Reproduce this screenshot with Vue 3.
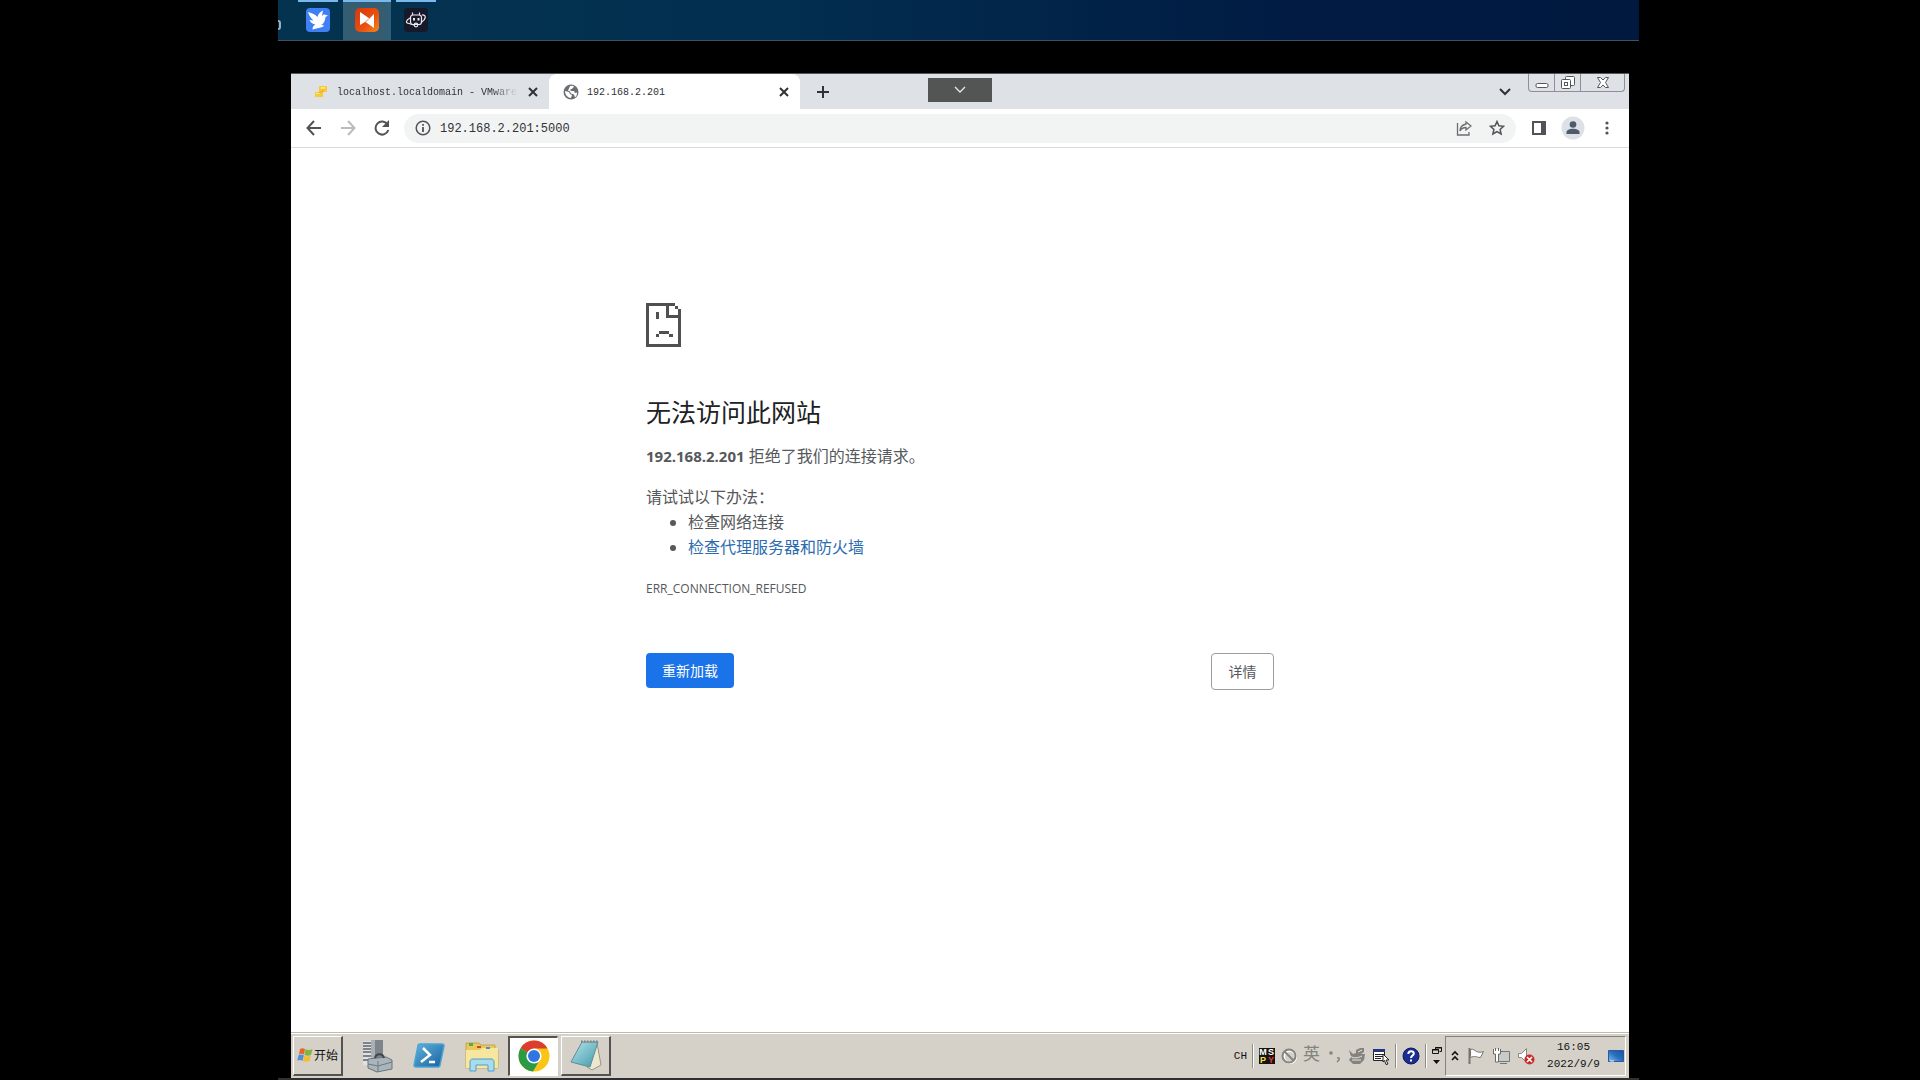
<script setup>
import { ref } from 'vue'

const url = ref('192.168.2.201:5000')
const tips = [
  { text: '检查网络连接', link: false },
  { text: '检查代理服务器和防火墙', link: true }
]
</script>

<template>
  <div class="desktop">
    <div class="stage">
      <header class="hostbar">
        <span class="cut" aria-hidden="true"></span>
        <button class="host first" aria-label="飞鸟">
          <svg width="24" height="24" viewBox="0 0 24 24"><rect width="24" height="24" rx="4" fill="#3f80f4" /><path fill="#fff" d="M2 4c3 1 7 2 9.500 5C12 6 14 4 17 2.500L16 8c1-1.500 2.500-2 4-1l2 .5-2.500 1.500c-.5 4-1.500 6-4 8l3 .8c-3 2.200-6 2.200-10 3.200l-2 .5c0-2.500 1-4 3-5-3-.5-5-2-6-4.500l4 .5C5 10.500 3 7.500 2 4z" /></svg>
        </button>
        <button class="host active" aria-label="ToDesk">
          <svg width="24" height="24" viewBox="0 0 24 24"><defs><linearGradient id="org" x1="0" y1="0" x2="1" y2="1"><stop offset="0" stop-color="#d8370c" /><stop offset=".6" stop-color="#ea5011" /><stop offset="1" stop-color="#f78a1c" /></linearGradient></defs><rect width="24" height="24" rx="5" fill="url(#org)" /><path fill="#fff" d="M5 4l9.500 6.500L10 14l-5 3zM19 6v14l-8.500-6L15 10z" /><path stroke="#f0a084" d="M10 14l5-4" /></svg>
        </button>
        <button class="host" aria-label="终端助手">
          <svg width="24" height="24" viewBox="0 0 24 24"><rect width="24" height="24" rx="4" fill="#17182a" /><g fill="none" stroke="#e8e8ee" stroke-width="1.200"><rect x="6.500" y="7" width="11" height="9.500" rx="2.500" /><path d="M8.500 7V4.500M15.500 7V4.500M6 10c-4 2-5 5-1 5.500l5 1.500M18 7c4.500-.5 4.500 4-1 7.500" /><path d="M10 10v2.500M14.500 10v2.500" stroke-width="2" /><circle cx="12" cy="17" r="1.800" /></g></svg>
        </button>
      </header>

      <div class="window">
        <div class="tabs">
          <div class="tab idle">
            <svg width="16" height="16" viewBox="0 0 16 16"><path fill="#f6cb35" d="M6 2h8v6h-4v5H2V8h4z" /><path stroke="#e5ad24" d="M6 8h4V4" fill="none" /><path fill="#fbe38a" d="M8 3h4v2H8zM3 9h4v1H3z" /></svg>
            <span class="name fade">localhost.localdomain - VMware</span>
            <button class="x" aria-label="关闭标签页"><svg width="12" height="12" viewBox="0 0 12 12"><path d="M2 2l8 8M10 2l-8 8" stroke="#2f3336" stroke-width="2" /></svg></button>
          </div>
          <div class="tab current">
            <svg width="16" height="16" viewBox="0 0 16 16"><circle cx="8" cy="8" r="7.500" fill="#6a6e72" /><path fill="#fff" d="M2 7l4 1 1 2 2 1-1 3c-3 0-6-3-6-7zM7 2l3-.3 1 1-2 2-2 1 1 1.300h3l1 2 2-.5c.3 2-.8 4-2 5l-1-3-3-1-1-2-2-1 1-2z" /></svg>
            <span class="name">192.168.2.201</span>
            <button class="x" aria-label="关闭标签页"><svg width="12" height="12" viewBox="0 0 12 12"><path d="M2 2l8 8M10 2l-8 8" stroke="#2f3336" stroke-width="2" /></svg></button>
          </div>
          <button class="plus" aria-label="新标签页"><svg width="12" height="12" viewBox="0 0 12 12"><path d="M6 0v12M0 6h12" stroke="#2f3336" stroke-width="2" /></svg></button>
          <button class="pill" aria-label="展开工具栏"><svg width="12" height="8" viewBox="0 0 12 8"><path d="M1 1l5 5 5-5" fill="none" stroke="#e8e8e8" stroke-width="1.300" /></svg></button>
          <button class="search" aria-label="搜索标签页"><svg width="12" height="8" viewBox="0 0 12 8"><path d="M1 1l5 5 5-5" fill="none" stroke="#2f3336" stroke-width="2" /></svg></button>
          <div class="controls">
            <button class="min" aria-label="最小化"><svg width="14" height="16" viewBox="0 0 14 16"><rect x="1" y="8.500" width="12" height="4" rx="1.500" fill="#fff" stroke="#54585d" /></svg></button>
            <button class="restore" aria-label="还原"><svg width="14" height="16" viewBox="0 0 14 16"><rect x="4.500" y="1.500" width="9" height="9" rx="1" fill="#fff" stroke="#54585d" /><rect x=".5" y="4.500" width="9" height="9" rx="1" fill="#fff" stroke="#54585d" /><rect x="3.500" y="7.500" width="3" height="3" fill="#fff" stroke="#54585d" /></svg></button>
            <button class="close" aria-label="关闭"><svg width="14" height="16" viewBox="0 0 14 16"><path d="M1.500 2.500h3L7 5l2.500-2.500h3L9.500 7.500l3 5h-3L7 10l-2.500 2.500h-3l3-5z" fill="#fff" stroke="#54585d" /></svg></button>
          </div>
        </div>

        <div class="toolbar">
          <button aria-label="后退"><svg width="16" height="16" viewBox="0 0 16 16"><path d="M15 8H2M8 1L1.500 8 8 15" fill="none" stroke="#505357" stroke-width="2" /></svg></button>
          <button aria-label="前进"><svg width="16" height="16" viewBox="0 0 16 16"><path d="M1 8h13M8 1l6.500 7L8 15" fill="none" stroke="#b9bbbd" stroke-width="2" /></svg></button>
          <button aria-label="重新加载此页"><svg width="16" height="16" viewBox="0 0 16 16"><path d="M13.500 4.500A6.500 6.500 0 1 0 14.300 10" fill="none" stroke="#505357" stroke-width="2" /><path d="M15 0v7H8z" fill="#505357" /></svg></button>
          <div class="omnibox">
            <svg width="16" height="16" viewBox="0 0 16 16"><circle cx="8" cy="8" r="6.800" fill="none" stroke="#505357" stroke-width="1.500" /><path d="M8 7v5M8 4v1.800" stroke="#505357" stroke-width="1.800" /></svg>
            <input v-model="url" aria-label="地址" spellcheck="false" />
            <button aria-label="分享"><svg width="16" height="16" viewBox="0 0 16 16"><path d="M1.500 3v12H13v-3M10 2l5 4-5 4V7.500C7 7.500 5 9 4 11c0-4 2-6 6-7z" fill="none" stroke="#6a6d70" stroke-width="1.300" /></svg></button>
            <button aria-label="收藏"><svg width="16" height="16" viewBox="0 0 16 16"><path d="M8 1.500l1.900 4.300 4.700.5-3.500 3.100 1 4.600L8 11.600 3.900 14l1-4.600L1.400 6.300l4.700-.5z" fill="none" stroke="#505357" stroke-width="1.500" /></svg></button>
          </div>
          <button aria-label="侧边栏"><svg width="14" height="14" viewBox="0 0 14 14"><rect x="1" y="1" width="12" height="12" fill="#fff" stroke="#505357" stroke-width="2" /><path d="M9 1h4v12H9z" fill="#505357" /></svg></button>
          <button aria-label="用户"><svg width="24" height="24" viewBox="0 0 24 24"><circle cx="12" cy="12" r="11.500" fill="#dde1e6" /><circle cx="12" cy="8.500" r="3.300" fill="#4d5b6c" /><path d="M5.500 18v-2c0-2 3-3.300 6.500-3.300s6.500 1.300 6.500 3.300v2z" fill="#4d5b6c" /></svg></button>
          <button aria-label="更多"><svg width="4" height="16" viewBox="0 0 4 16"><g fill="#505357"><circle cx="2" cy="3" r="1.600" /><circle cx="2" cy="8" r="1.600" /><circle cx="2" cy="13" r="1.600" /></g></svg></button>
        </div>

        <main class="page">
          <section class="error">
            <svg class="sad" width="36" height="45" viewBox="0 0 36 45" shape-rendering="crispEdges"><path fill="#505050" d="M0 0h29v3H3v38h29V6h3v38H0zM20 3h3v9h9v3H20zM29 3h3v3h-3zM10 9h3v7h-3zM13 28h10v3H13zM10 31h3v3h-3zM23 31h4v3h-4z" /></svg>
            <h1>无法访问此网站</h1>
            <p><strong>192.168.2.201</strong> 拒绝了我们的连接请求。</p>
            <div class="try">
              <p>请试试以下办法：</p>
              <ul>
                <li v-for="tip in tips" :key="tip.text">
                  <a v-if="tip.link" href="#buttons">{{ tip.text }}</a>
                  <template v-else>{{ tip.text }}</template>
                </li>
              </ul>
            </div>
            <div class="code">ERR_CONNECTION_REFUSED</div>
            <div id="buttons" class="buttons">
              <button class="reload">重新加载</button>
              <button class="details">详情</button>
            </div>
          </section>
        </main>

        <footer class="taskbar">
          <button class="start raised">
            <svg width="16" height="16" viewBox="0 0 16 16"><path fill="#e5652e" d="M3 2c2-1 3-1 5 0L7 7.500C5 6.500 4 6.500 2 7.500z" /><path fill="#7db642" d="M8.500 2.300c2 1 4.500 1 7 0L14 8c-2 1-4.500 1-6.500 0z" /><path fill="#4f8fd6" d="M1.500 8.200c2-1 3.500-1 5.300 0l-1.200 5.500c-2-1-3.300-1-5.300 0z" /><path fill="#f3bd2c" d="M7.300 8.700c2 1 4.500 1 6.500 0l-1.300 5.300c-2 1-4.500 1-6.500 0z" /></svg>
            <span>开始</span>
          </button>
          <div class="apps">
            <button aria-label="服务器管理器"><svg width="32" height="34" viewBox="0 0 32 34"><path fill="#7f868b" d="M9 1h12v24H9z" /><path fill="#a9b1b7" d="M9 1h4v24H9z" /><path fill="#dfe3e5" d="M1 2h8v24H1z" /><path stroke="#5d646a" stroke-width="1.500" d="M1 4h8M1 7h8M1 10h8M1 13h8M1 17h8M1 21h8" /><path fill="#a9b4bb" stroke="#69747c" d="M6 20l18-2 6 3v9l-15 3-9-4z" /><path stroke="#6d7a83" fill="none" d="M6 25l10 2 14-4M16 22v11" /><path fill="none" stroke="#3f474d" stroke-width="2" d="M13 19c1-5 8-5 9 0" /></svg></button>
            <button aria-label="PowerShell"><svg width="32" height="34" viewBox="0 0 32 34"><defs><linearGradient id="ps" x1="0" y1="0" x2="1" y2="1"><stop offset="0" stop-color="#5fb4e0" /><stop offset="1" stop-color="#195f9d" /></linearGradient></defs><path fill="url(#ps)" stroke="#4aa5d3" stroke-width="1.500" d="M7 5h22c1 0 2 1 2 2l-4 19c0 1-1 2-2 2H3c-1 0-2-1-2-2L5 7c0-1 1-2 2-2z" /><path d="M10 9l7 7-9 7M16 23h6" fill="none" stroke="#fff" stroke-width="2.500" /></svg></button>
            <button class="folder" aria-label="资源管理器"><svg width="36" height="34" viewBox="0 0 36 34"><path fill="#e9c85e" stroke="#c7a648" d="M2 9V4h13l2 2h14v4h3v19H2z" /><path fill="#f7e69d" d="M2 11h14l2-2h16v20H2z" /><path fill="#58a94c" d="M5 4h4v3H5z" /><path fill="#c64a33" d="M13 7h4v2h-4z" /><path fill="#4c8fc4" d="M22 8h4v2h-4z" /><path fill="#a9dbef" stroke="#4e9fc4" d="M6 32v-9c0-2 1-3 3-3h18c2 0 3 1 3 3v9h-6v-6H12v6z" /></svg></button>
            <button class="sunken" aria-label="Chrome"><svg width="32" height="32" viewBox="0 0 32 32"><circle cx="16" cy="16" r="15.500" fill="#fbc516" /><path fill="#dc3d2f" d="M16 16L2.600 8.200A15.500 15.500 0 0 1 29.500 8.500H16z" /><path fill="#2b9a48" d="M16 16L2.600 8.200A15.500 15.500 0 0 0 15 31.500l7-12z" /><circle cx="16" cy="16" r="7.600" fill="#fff" /><circle cx="16" cy="16" r="6" fill="#2f76e0" /></svg></button>
            <button class="raised note" aria-label="记事本"><svg width="34" height="32" viewBox="0 0 34 32"><defs><linearGradient id="np" x1="0" y1="0" x2="1" y2="1"><stop offset="0" stop-color="#b8e4ea" /><stop offset="1" stop-color="#3f98ab" /></linearGradient></defs><path fill="#ece8cf" stroke="#9c9679" d="M28 4l4 22-9 5-5-3z" /><path fill="url(#np)" stroke="#5b8e99" d="M13 3h16l-8 25-19-5z" /><path stroke="#7c7c78" stroke-width="2" stroke-dasharray="1.500 1.500" d="M12 2.500h17" /></svg></button>
          </div>
          <div class="lang">
            <span class="ch">CH</span>
            <i class="sep"></i>
            <span class="mspy" aria-label="MSPY"><b>M</b><b>S</b><b class="py">P</b><b class="pr">Y</b></span>
            <svg width="16" height="16" viewBox="0 0 16 16"><g fill="none" stroke="#fff" stroke-width="2"><circle cx="9" cy="9" r="6" /></g><g fill="none" stroke="#85837d" stroke-width="2"><circle cx="8" cy="8" r="6.500" /><path d="M3.500 3.500l9 9" /></g></svg>
            <span class="ying">英</span>
            <svg width="16" height="16" viewBox="0 0 16 16"><circle cx="5" cy="5" r="1.800" fill="#85837d" /><path d="M11 10h2v2l-2 2" fill="none" stroke="#85837d" stroke-width="1.500" /></svg>
            <svg width="18" height="18" viewBox="0 0 18 18"><path fill="#85837d" d="M1 3l4 4 3-1V3l4-2h4v4l-3 2h4l-1 6-4 4H5l-4-4 2-3z" /><path stroke="#e8e5df" fill="none" d="M2 9c4 3 8 2 12 0M4 13h9M10 5l4-2" /></svg>
            <svg width="18" height="18" viewBox="0 0 18 18"><path fill="#fff" stroke="#222" d="M1.500 2.500h11v11h-11z" /><path fill="#26367c" d="M1 2h12v3H1z" /><path stroke="#222" d="M3 7.500h8M3 9.500h8M3 11.500h6" /><path fill="#fff" stroke="#222" d="M11 7l6 6h-3l2 4-2 .5-1.500-4-1.500 1.500z" /></svg>
            <i class="sep"></i>
            <svg width="18" height="18" viewBox="0 0 18 18"><circle cx="9" cy="9" r="8" fill="#1b2f92" stroke="#0c185b" /><path d="M6.300 7c0-4 5.500-3.500 5.500-.5 0 2-2.800 2-2.800 4.500M9 12.500v2" fill="none" stroke="#fff" stroke-width="2" /></svg>
            <i class="sep"></i>
            <svg class="mini" width="10" height="20" viewBox="0 0 10 20"><path fill="none" stroke="#111" d="M3.500 4V1.500h6v4h-2M.5 3.500h6v4h-6zM3 2h7M0 4h7" /><path fill="#111" d="M1 14h7l-3.500 4z" /></svg>
          </div>
          <div class="tray">
            <svg width="10" height="16" viewBox="0 0 10 16"><path d="M2 7l3-3 3 3M2 12l3-3 3 3" fill="none" stroke="#111" stroke-width="1.600" /></svg>
            <svg width="18" height="18" viewBox="0 0 18 18"><path d="M2.500 1v16" stroke="#77756f" stroke-width="2" /><path fill="#fff" stroke="#77756f" d="M3.500 2.500c3-1 4 1 6 2s5 1 7 0l-3 6c-3 0-4-1-5-1s-3 0-5 1z" /></svg>
            <svg width="18" height="18" viewBox="0 0 18 18"><path fill="#c9cbca" stroke="#77756f" d="M5.500 4.500h12v10h-12zM8 16.500h7" /><path fill="#fff" stroke="#6a6964" d="M1.500 2v5h2v8h3V7h2V2M3.500 1v3M6.500 1v3" /></svg>
            <svg width="18" height="18" viewBox="0 0 18 18"><path fill="#fff" stroke="#8b8983" d="M1.500 6.500h3l5-5v14l-5-5h-3z" /><circle cx="12.500" cy="12.500" r="5" fill="#c92c26" /><path d="M10 10l5 5M15 10l-5 5" stroke="#fff" stroke-width="1.600" /></svg>
            <time class="clock" datetime="2022-09-09T16:05"><span>16:05</span><span>2022/9/9</span></time>
            <svg class="show" width="16" height="14" viewBox="0 0 16 14"><defs><linearGradient id="sd" x1="0" y1="1" x2="1" y2="0"><stop offset="0" stop-color="#7cc0ef" /><stop offset=".5" stop-color="#2b6fc0" /><stop offset="1" stop-color="#1a50a0" /></linearGradient></defs><path fill="url(#sd)" stroke="#285a9c" d="M.5 1.500h15v11H.5z" /><path d="M2 12h4" stroke="#e6f4ff" /></svg>
          </div>
        </footer>
      </div>
    </div>
  </div>
</template>

<style>
html,
body {
  margin: 0;
  background: #000;
}
</style>

<style scoped>
* {
  box-sizing: border-box;
}
.desktop {
  display: flex;
  min-height: 100vh;
  background: #000;
  font-family: "Open Sans", "Noto Sans CJK SC", sans-serif;
}
button {
  display: flex;
  align-items: center;
  justify-content: center;
  margin: 0;
  padding: 0;
  border: 0;
  background: none;
  font: inherit;
  color: inherit;
}
svg {
  flex: none;
  display: block;
}
.stage {
  flex: 1;
  display: flex;
  flex-direction: column;
  min-width: 0;
  margin: 0 281px 0 278px;
  border-bottom: 2px solid #303030;
}
.hostbar {
  display: flex;
  height: 41px;
  border-bottom: 1px solid #43515c;
  background: linear-gradient(90deg, #04334f, #022f50 35%, #011b43 75%, #01193f);
}
.cut {
  width: 3px;
  height: 10px;
  margin-top: 20px;
  border-radius: 0 6px 6px 0;
  border: 2px solid #9fb0bb;
  border-left: 0;
}
.host {
  width: 40px;
  height: 40px;
  padding-bottom: 2px;
  border-top: 2px solid #78b8ec;
}
.first {
  margin-left: 17px;
}
.active {
  width: 48px;
  margin: 0 5px;
  box-shadow: inset -4px 0 #2f5f7b;
  background: #355d72;
}
.window {
  flex: 1;
  display: flex;
  flex-direction: column;
  margin: 32px 10px 0 13px;
  border-top: 1px solid #55585a;
  background: #fff;
}
.tabs {
  position: relative;
  display: flex;
  height: 35px;
  background: #dee2e6;
  font-family: "Liberation Mono", monospace;
  font-size: 10px;
  color: #303336;
}
.tab {
  display: flex;
  align-items: center;
  padding-right: 8px;
}
.idle {
  width: 258px;
  padding-left: 22px;
}
.current {
  width: 251px;
  padding-left: 14px;
  border-radius: 8px 8px 0 0;
  background: #fff;
}
.name {
  flex: 1;
  margin-left: 8px;
  padding-top: 2px;
  overflow: hidden;
  white-space: nowrap;
}
.fade {
  -webkit-mask-image: linear-gradient(90deg, #000 85%, transparent);
  mask-image: linear-gradient(90deg, #000 85%, transparent);
}
.x {
  width: 16px;
  height: 16px;
}
.idle .x {
  margin-left: 7px;
}
.plus {
  width: 46px;
}
.pill {
  position: absolute;
  top: 4px;
  left: 50%;
  width: 64px;
  height: 24px;
  margin-left: -32px;
  background: #535555;
}
.search {
  width: 34px;
  margin-left: auto;
}
.controls {
  display: flex;
  height: 18px;
  margin: 0 4px 0 6px;
  border: 1px solid #8a9095;
  border-top: 0;
  border-radius: 0 0 4px 4px;
}
.min {
  width: 25px;
}
.restore {
  width: 27px;
  border: solid #8a9095;
  border-width: 0 1px;
}
.close {
  width: 43px;
}
.toolbar {
  display: flex;
  align-items: center;
  height: 39px;
  padding: 0 5px 0 6px;
  border-bottom: 1px solid #d8dadb;
}
.toolbar > button {
  width: 34px;
  height: 34px;
}
.omnibox {
  flex: 1;
  display: flex;
  align-items: center;
  height: 29px;
  margin: 0 6px 0 5px;
  padding: 0 3px 0 11px;
  border-radius: 15px;
  background: #f2f4f4;
}
.omnibox input {
  flex: 1;
  min-width: 0;
  padding: 2px 0 0 9px;
  border: 0;
  outline: 0;
  background: none;
  font-family: "Liberation Mono", monospace;
  font-size: 12px;
  color: #303336;
}
.omnibox button {
  width: 33px;
  height: 29px;
}
.page {
  flex: 1;
  padding: 155px 20px 0;
}
.error {
  max-width: 628px;
  margin: 0 auto;
  font-size: 16px;
  line-height: 25px;
  color: #55585c;
}
.error p {
  margin: 0;
}
h1 {
  margin: 47px 0 15px;
  font-size: 25px;
  font-weight: 400;
  line-height: 34px;
  color: #202124;
}
.error strong {
  font-size: 15px;
}
.try {
  margin-top: 16px;
}
ul {
  margin: 0;
  padding-left: 42px;
}
a {
  color: #2b6cb0;
  text-decoration: none;
}
.code {
  margin-top: 16px;
  font-size: 12px;
}
.buttons {
  display: flex;
  justify-content: space-between;
  align-items: flex-start;
  margin-top: 52px;
  font-size: 14px;
}
.reload {
  width: 88px;
  height: 35px;
  border-radius: 4px;
  background: #1a73e8;
  color: #fff;
}
.details {
  width: 63px;
  height: 37px;
  border: 1px solid #9b9da0;
  border-radius: 4px;
}
.taskbar {
  display: flex;
  align-items: center;
  height: 46px;
  padding: 0 3px 0 2px;
  border-top: 1px solid #bdbab2;
  box-shadow: inset 0 1px #fff;
  background: #d5d1c9;
  font-family: "Liberation Mono", "Noto Sans CJK SC", monospace;
  color: #111;
}
.raised {
  height: 40px;
  border: solid;
  border-width: 1px 2px 2px 1px;
  border-color: #fff #55534f #55534f #fff;
}
.start {
  width: 50px;
  gap: 1px;
  font-size: 12px;
}
.apps {
  display: flex;
  align-items: center;
  margin-left: 19px;
  gap: 19px;
}
.sunken {
  width: 50px;
  height: 40px;
  margin-left: -11px;
  border: solid;
  border-width: 2px 1px 1px 2px;
  border-color: #55534f #fff #fff #55534f;
  background: #fff;
}
.note {
  width: 50px;
  margin-left: -16px;
}
.lang {
  display: flex;
  align-items: center;
  gap: 6px;
  margin-left: auto;
}
.ch {
  font-size: 11px;
}
.sep {
  width: 2px;
  height: 24px;
  margin: 0 -1px;
  border-left: 1px solid #8e8b84;
  border-right: 1px solid #fff;
}
.mspy {
  display: grid;
  grid-template-columns: 8px 8px;
  width: 16px;
  height: 16px;
  background: #16140f;
  color: #fff;
  font: 700 9px/8px "Liberation Sans", sans-serif;
  text-align: center;
}
.py {
  color: #f2e24a;
}
.pr {
  color: #e23b32;
}
.ying {
  width: 17px;
  font-size: 17px;
  line-height: 20px;
  color: #85837d;
}
.mini {
  margin-right: 3px;
}
.tray {
  display: flex;
  align-items: center;
  gap: 7px;
  width: 181px;
  height: 40px;
  padding: 0 1px 0 4px;
  border: 1px solid;
  border-color: #85827b #fff #fff #85827b;
}
.clock {
  flex: 1;
  display: flex;
  flex-direction: column;
  align-items: center;
  margin-left: 4px;
  font-size: 11px;
  line-height: 17px;
}
</style>
